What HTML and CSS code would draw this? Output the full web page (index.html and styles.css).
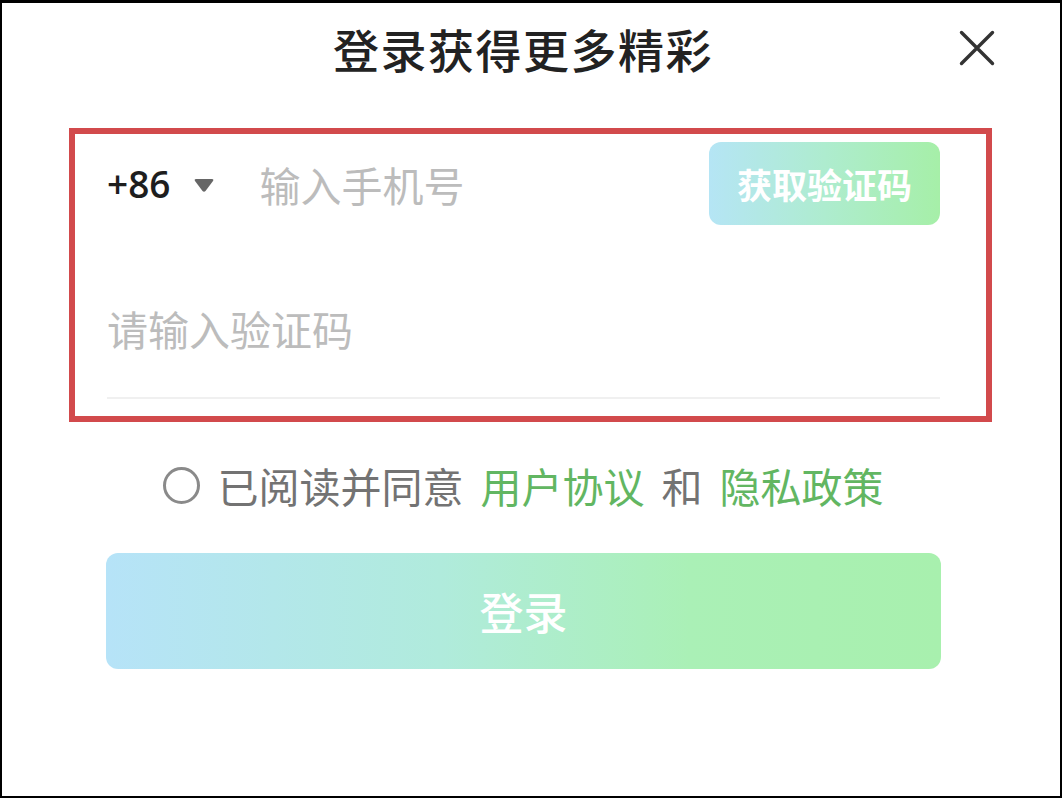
FILE: index.html
```html
<!DOCTYPE html>
<html lang="zh-CN">
<head>
<meta charset="utf-8">
<title>登录获得更多精彩</title>
<link rel="stylesheet" href="styles.css">
</head>
<body>
<div class="screen">
  <header class="header">
    <span></span>
    <h1 class="title">登录获得更多精彩</h1>
    <button class="close" aria-label="关闭">
      <svg width="36" height="36" viewBox="0 0 36 36"><path d="M2.5 2.5 L33.5 33.5 M33.5 2.5 L2.5 33.5" stroke="#333" stroke-width="3.4" stroke-linecap="round" fill="none"/></svg>
    </button>
  </header>

  <div class="highlight">
    <div class="row phone-row">
      <span class="code">+86</span>
      <svg class="caret" width="22" height="16" viewBox="0 0 22 16"><path d="M3 2 H19 Q21 2 20 4 L12.5 14 Q11 15.5 9.5 14 L2 4 Q1 2 3 2 Z" fill="#666"/></svg>
      <input class="field" type="text" placeholder="输入手机号">
      <button class="get-code">获取验证码</button>
    </div>
    <div class="row sms-row">
      <input class="field" type="text" placeholder="请输入验证码">
    </div>
  </div>

  <div class="agree">
    <span class="radio"></span>
    <span class="txt">已阅读并同意</span>
    <a class="link">用户协议</a>
    <span class="txt">和</span>
    <a class="link">隐私政策</a>
  </div>

  <button class="login">登录</button>
</div>
</body>
</html>
```

FILE: styles.css
```css
html, body {
  margin: 0;
  padding: 0;
  background: #fff;
}
body {
  font-family: "Noto Sans CJK SC", "Noto Sans", sans-serif;
}
.screen {
  width: 1062px;
  height: 798px;
  box-sizing: border-box;
  border: 2px solid #000;
  border-top-width: 3px;
  background: #fff;
  overflow: hidden;
}
.header {
  height: 90px;
  display: grid;
  grid-template-columns: 1fr auto 1fr;
  align-items: center;
  padding: 0 65px 0 49px;
}
.title {
  margin: 0;
  font-size: 46px;
  font-weight: 500;
  color: #222;
  letter-spacing: 1.5px;
  line-height: 1;
}
.close {
  justify-self: end;
  border: 0;
  background: none;
  padding: 0;
  width: 36px;
  height: 36px;
  display: flex;
}
.highlight {
  margin: 35px 68px 0 67px;
  border: 6px solid #d24a4c;
  padding: 8px 46px 17px 32px;
}
.row {
  display: flex;
  align-items: center;
}
.phone-row {
  height: 83px;
}
.code {
  font-family: "Open Sans", "Noto Sans", sans-serif;
  font-size: 37px;
  font-weight: 600;
  color: #1e1e1e;
  line-height: 1;
}
.caret {
  margin-left: 23px;
  margin-top: 2px;
}
.field {
  flex: 1;
  min-width: 0;
  border: 0;
  outline: none;
  padding: 0;
  background: transparent;
  font-family: "Noto Sans CJK SC", sans-serif;
  font-size: 41px;
  color: #333;
  height: 50px;
}
.field::placeholder {
  color: #bcbcbc;
}
.phone-row .field {
  margin-left: 44px;
}
.get-code {
  width: 231px;
  height: 83px;
  border: 0;
  border-radius: 12px;
  background: linear-gradient(90deg, #b5e5f5 0%, #aeeccf 50%, #a6efa8 100%);
  color: #fff;
  font-family: "Noto Sans CJK SC", sans-serif;
  font-size: 35px;
  font-weight: 700;
  padding: 0;
}
.sms-row {
  padding: 78px 0 44px;
  border-bottom: 2px solid #f0f0f0;
}
.agree {
  margin-top: 40px;
  height: 46px;
  display: flex;
  align-items: center;
  justify-content: center;
  gap: 17px;
  font-size: 41px;
  line-height: 1;
  padding-right: 16px;
}
.radio {
  width: 31px;
  height: 31px;
  border: 3px solid #8a8a8a;
  border-radius: 50%;
  margin-right: 1px;
}
.txt {
  color: #737373;
}
.link {
  color: #62b662;
}
.login {
  display: block;
  margin: 45px 0 0 104px;
  width: 835px;
  height: 116px;
  border: 0;
  border-radius: 12px;
  background: linear-gradient(90deg, #b6e3f8 0%, #b0ebdc 40%, #aaf0b6 70%, #a8f0ae 100%);
  color: #fff;
  font-family: "Noto Sans CJK SC", sans-serif;
  font-size: 44px;
  font-weight: 500;
  padding: 0;
}
```
